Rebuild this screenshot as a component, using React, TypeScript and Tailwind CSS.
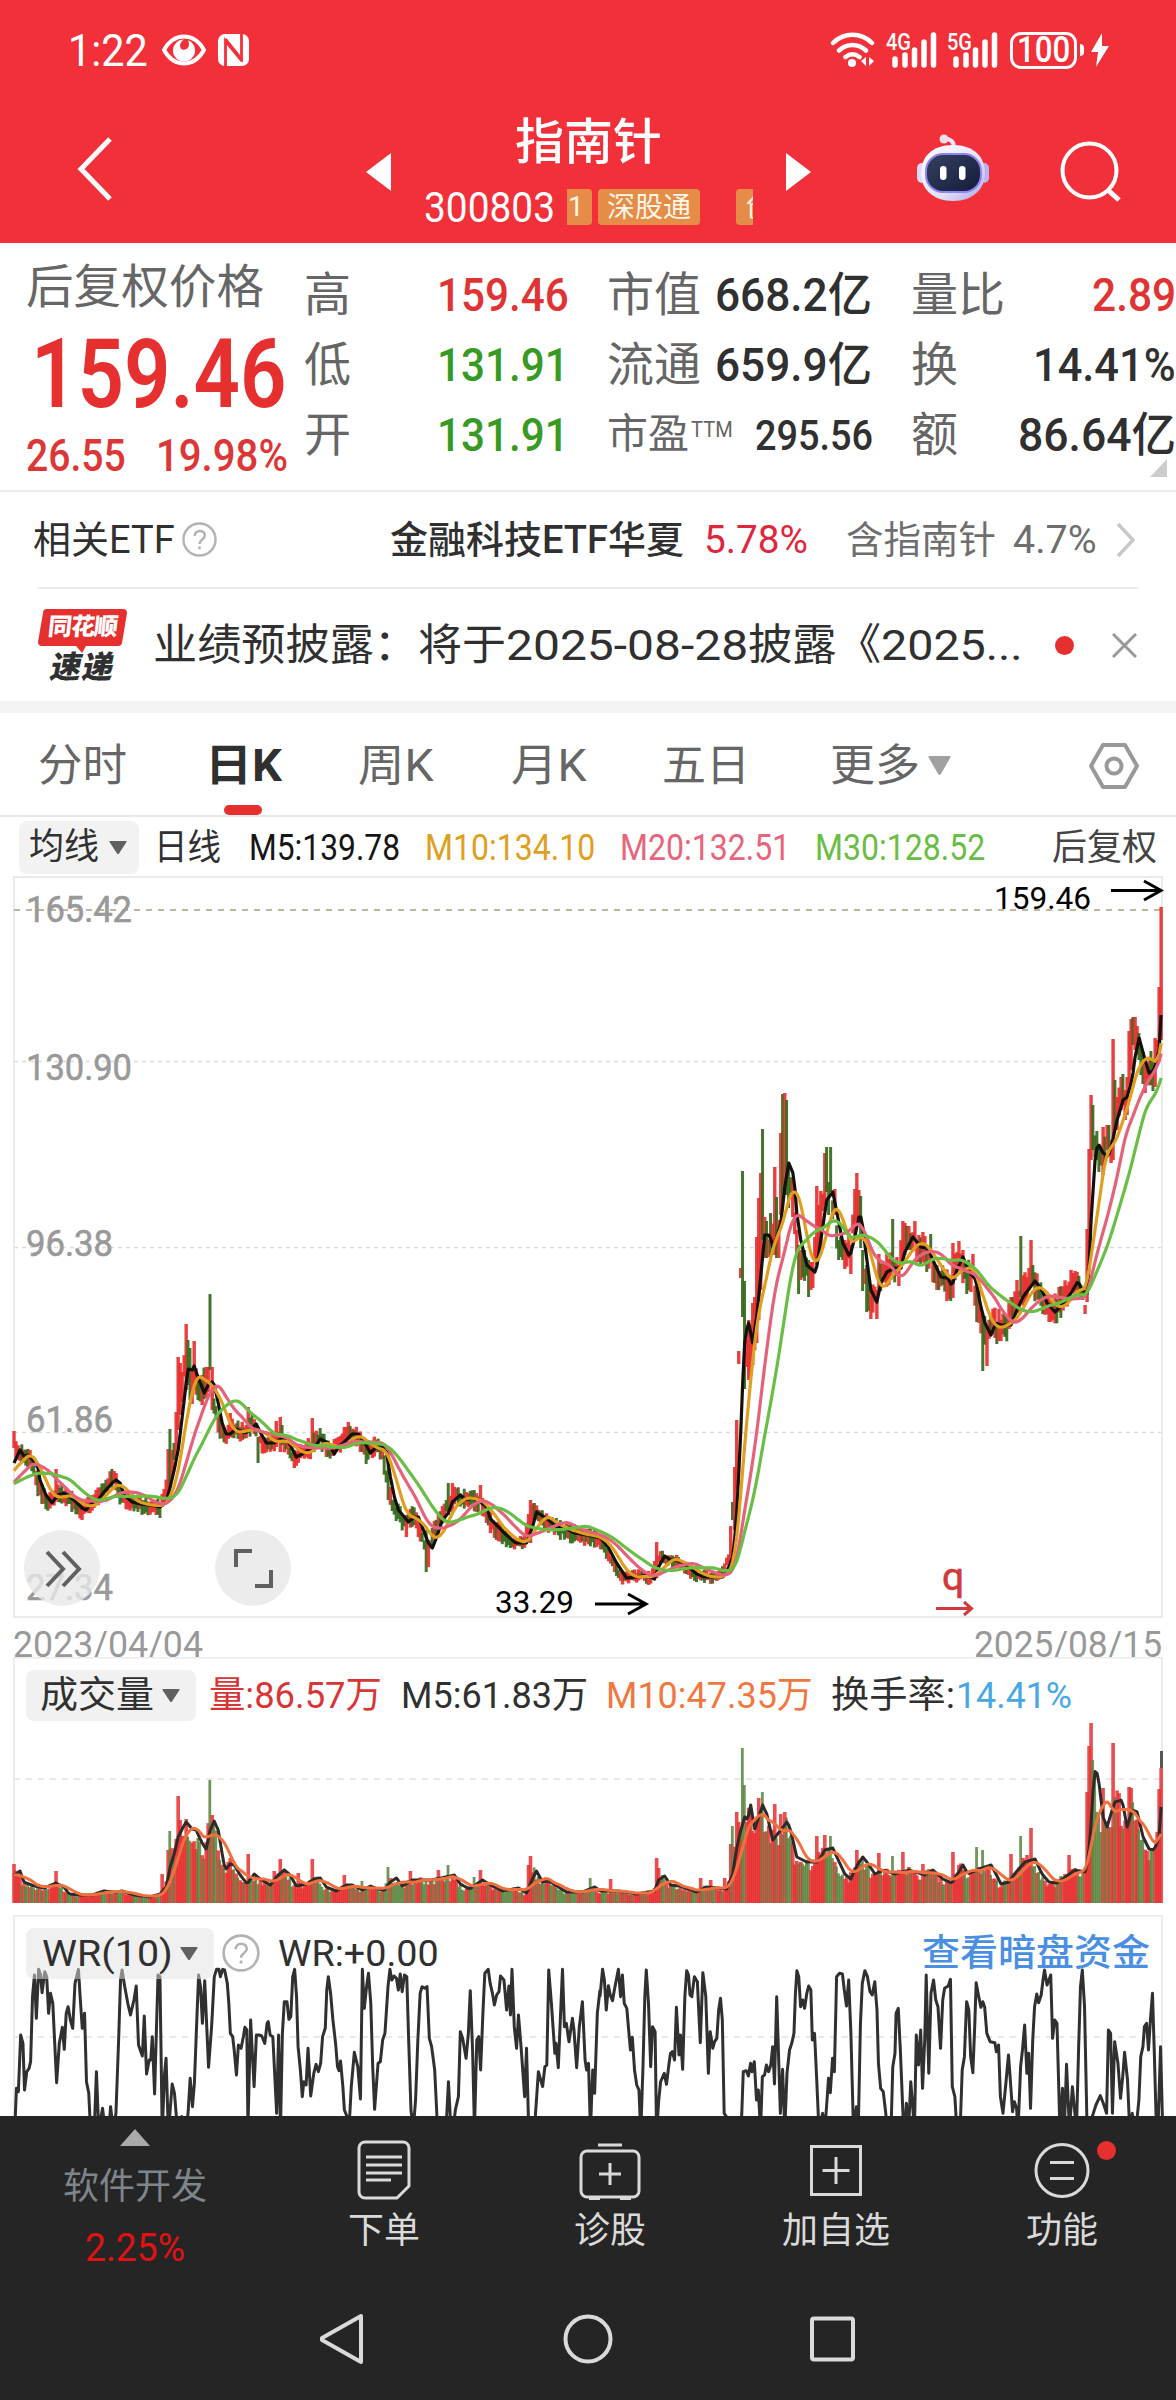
import { useLayoutEffect, useRef, useState, type ReactNode } from "react";

type Point = [number, number];

const DAYS = 574;
const UP = "#e62f2f";
const DOWN = "#35691a";

// [day, y] keyframes of the five day average
const M5: Point[] = [
  [0, 1463], [3, 1450], [5, 1456], [7, 1455], [10, 1461], [12, 1468], [13, 1480], [16, 1495], [19, 1503], [22, 1495],
  [25, 1493], [28, 1497], [31, 1502], [34, 1508], [36, 1510], [38, 1505], [42, 1500], [45, 1492], [49, 1483], [51, 1480],
  [53, 1483], [55, 1495], [59, 1502], [63, 1504], [68, 1505], [73, 1507], [76, 1502], [78, 1487], [80, 1470], [82, 1450],
  [84, 1417], [86, 1383], [87, 1369], [89, 1370], [90, 1366], [92, 1378], [93.5, 1385], [95, 1393], [97, 1385], [99, 1382],
  [100, 1385], [102, 1403], [104, 1423], [106, 1434], [108, 1434], [111, 1429], [115.5, 1433], [118, 1430], [121, 1424],
  [123, 1432], [126, 1443], [130, 1443], [134, 1438], [137.5, 1443], [141, 1457], [144, 1454], [147, 1450], [150, 1448],
  [153, 1439], [157, 1443], [160, 1454], [162, 1447], [165, 1442], [169, 1434], [172, 1434], [175, 1442], [178, 1453],
  [180.5, 1448], [184, 1447], [186, 1452], [188, 1477], [190, 1497], [192, 1510], [195, 1517], [197, 1522], [200, 1517],
  [202, 1517], [204.5, 1530], [207, 1543], [209, 1548], [211, 1538], [214, 1520], [217, 1513], [219, 1502], [223, 1495],
  [225.5, 1500], [229, 1498], [233, 1502], [236, 1507], [238, 1519], [242, 1527], [246, 1535], [250.5, 1543], [256, 1543],
  [259, 1527], [261, 1512], [265, 1517], [269, 1523], [272.5, 1528], [276, 1529], [280, 1533], [286, 1535], [293, 1538],
  [297, 1548], [301, 1563], [306, 1578], [311, 1577], [316, 1575], [320, 1579], [322, 1567], [325, 1556], [328, 1560],
  [332.5, 1561], [337, 1567], [341, 1574], [345, 1577], [354, 1577], [356, 1572], [359, 1557], [360.6, 1527],
  [361.7, 1487], [363, 1433], [364, 1383], [364.6, 1350], [365.5, 1333], [367, 1323], [369, 1343], [371, 1317],
  [373, 1277], [375, 1235], [377.5, 1235], [379, 1247], [381, 1237], [383, 1223], [385, 1187], [387, 1163], [389.5, 1175],
  [391, 1213], [393, 1240], [396, 1265], [400.5, 1273], [403, 1240], [406, 1200], [409, 1192], [411.5, 1217],
  [414, 1243], [417.5, 1257], [420, 1237], [422.5, 1212], [424, 1227], [426, 1260], [428, 1290], [431, 1302],
  [433, 1283], [436, 1272], [440, 1268], [443, 1268], [445, 1252], [449, 1237], [453, 1247], [456.5, 1248], [459, 1260],
  [463, 1277], [466.5, 1278], [468.5, 1286], [471, 1270], [474, 1257], [477.5, 1273], [480.5, 1280], [482.5, 1303],
  [485, 1323], [488, 1335], [490.5, 1323], [493, 1325], [498, 1325], [500.5, 1312], [504, 1297], [510, 1281],
  [513.5, 1290], [516, 1303], [520, 1312], [523.5, 1305], [528, 1293], [531.5, 1281], [533.5, 1290], [536, 1293],
  [537, 1267], [538, 1220], [540, 1160], [541.4, 1143], [544, 1153], [546.5, 1157], [548.5, 1143], [551, 1120],
  [554, 1100], [556, 1097], [558.5, 1080], [560, 1057], [562, 1038], [565, 1060], [567, 1073], [569.5, 1070],
  [572, 1050], [573, 1015],
];

// candles that stand out: [day, high y, low y, 1 = up / 0 = down]
const SPIKES: [number, number, number, number][] = [
  [0, 1431, 1448, 1], [21, 1469, 1500, 1], [50, 1471, 1482, 1], [73, 1505, 1518, 0], [77, 1449, 1500, 1], [78, 1429, 1487, 0],
  [79, 1450, 1478, 1], [81, 1412, 1460, 1], [82, 1357, 1430, 1], [83, 1363, 1415, 1], [84, 1372, 1402, 1], [86, 1324, 1390, 1],
  [87, 1340, 1385, 0], [88, 1348, 1400, 0], [89, 1370, 1404, 1], [90, 1341, 1390, 1], [92, 1375, 1400, 0], [94, 1375, 1405, 1],
  [96, 1367, 1398, 1], [97, 1367, 1392, 1], [98, 1294, 1370, 0], [99, 1367, 1410, 1], [108, 1413, 1437, 1], [117, 1407, 1430, 1],
  [122, 1437, 1463, 0], [131, 1421, 1447, 1], [133, 1417, 1452, 1], [134, 1425, 1445, 0], [140, 1450, 1468, 1], [149, 1418, 1448, 1],
  [153, 1428, 1440, 0], [165, 1427, 1446, 1], [167, 1422, 1445, 1], [187, 1450, 1500, 0], [196, 1515, 1537, 1], [206, 1530, 1572, 0],
  [207, 1540, 1567, 1], [217, 1483, 1515, 0], [219, 1483, 1512, 1], [233, 1485, 1503, 1], [257, 1514, 1540, 1], [258, 1500, 1543, 1],
  [260, 1503, 1520, 0], [321, 1542, 1578, 1], [358, 1526, 1570, 1], [359, 1502, 1520, 0], [360, 1467, 1530, 1], [361, 1420, 1490, 1],
  [362, 1351, 1364, 1], [363, 1268, 1278, 1], [364, 1171, 1317, 0], [365, 1281, 1389, 0], [366, 1340, 1367, 1], [367, 1320, 1380, 1],
  [368, 1325, 1375, 1], [369, 1303, 1365, 1], [370, 1297, 1350, 1], [371, 1237, 1343, 1], [372, 1198, 1320, 1], [373, 1173, 1290, 1],
  [374, 1129, 1240, 0], [375, 1217, 1258, 1], [376, 1221, 1258, 0], [378, 1213, 1255, 0], [380, 1167, 1255, 1], [381, 1197, 1258, 0],
  [382, 1220, 1258, 1], [383, 1133, 1215, 1], [384, 1094, 1205, 0], [385, 1093, 1195, 1], [386, 1100, 1195, 0], [387, 1165, 1208, 0],
  [389, 1180, 1217, 1], [392, 1245, 1294, 0], [393, 1250, 1280, 1], [397, 1260, 1297, 0], [398, 1262, 1290, 1], [399, 1262, 1288, 1],
  [401, 1186, 1265, 1], [402, 1205, 1250, 1], [403, 1191, 1250, 1], [405, 1153, 1205, 1], [406, 1147, 1192, 0], [407, 1182, 1215, 0],
  [408, 1147, 1192, 0], [410, 1189, 1215, 1], [412, 1240, 1260, 0], [415, 1240, 1269, 1], [418, 1245, 1274, 1], [420, 1189, 1235, 1],
  [421, 1173, 1220, 1], [422, 1190, 1225, 1], [423, 1196, 1248, 0], [424, 1250, 1291, 0], [426, 1265, 1312, 0], [428, 1290, 1319, 1],
  [431, 1290, 1319, 1], [432, 1254, 1290, 1], [439, 1219, 1268, 0], [442, 1265, 1286, 1], [444, 1221, 1260, 1], [445, 1223, 1255, 1],
  [447, 1226, 1250, 1], [450, 1221, 1240, 1], [452, 1235, 1262, 1], [454, 1232, 1262, 1], [458, 1234, 1258, 0], [461, 1265, 1290, 1],
  [468, 1280, 1301, 0], [469, 1243, 1298, 1], [472, 1241, 1262, 1], [476, 1265, 1294, 0], [478, 1270, 1292, 1], [479, 1254, 1275, 1],
  [481, 1280, 1322, 0], [482, 1290, 1323, 1], [484, 1315, 1371, 0], [486, 1325, 1366, 1], [491, 1325, 1344, 0], [493, 1320, 1341, 1],
  [498, 1297, 1325, 1], [501, 1280, 1310, 1], [503, 1236, 1297, 0], [506, 1277, 1300, 1], [508, 1240, 1285, 1], [509, 1265, 1285, 0],
  [528, 1270, 1290, 1], [529, 1273, 1290, 1], [531, 1272, 1290, 1], [535, 1305, 1314, 1], [536, 1229, 1302, 1], [537, 1149, 1265, 1],
  [538, 1095, 1160, 1], [539, 1105, 1150, 0], [541, 1131, 1160, 0], [542, 1145, 1172, 0], [544, 1127, 1175, 1], [546, 1125, 1150, 1],
  [547, 1125, 1155, 0], [548, 1140, 1163, 1], [549, 1039, 1160, 1], [550, 1080, 1130, 0], [551, 1097, 1130, 1], [553, 1077, 1110, 1],
  [554, 1074, 1105, 0], [555, 1090, 1120, 1], [556, 1077, 1115, 1], [557, 1031, 1085, 1], [558, 1019, 1070, 1], [559, 1017, 1045, 0],
  [560, 1017, 1050, 1], [561, 1026, 1055, 1], [562, 1033, 1060, 0], [563, 1045, 1075, 0], [565, 1063, 1093, 1], [568, 1051, 1085, 0],
  [569, 1060, 1091, 0], [570, 1038, 1087, 1], [571, 1040, 1066, 1], [572, 987, 1045, 1], [573, 907, 1040, 1],
];

// [day, height] keyframes of the averaged volume
const VOLUME: Point[] = [
  [0, 27], [3, 32], [5, 21], [10, 17], [15, 15], [21, 20], [25, 16], [27.5, 9], [33, 8], [39, 8], [45, 12], [50, 11], [54, 12],
  [60, 8], [68, 6], [73, 9], [76, 16], [78, 36], [80, 49], [82, 66], [84.5, 76], [86, 81], [89, 74], [91, 73], [92.5, 66],
  [94.5, 58], [96, 54], [98, 73], [100, 82], [102, 73], [104, 49], [105.5, 33], [108, 39], [110, 38], [113, 28], [116.5, 19],
  [120, 29], [123, 24], [128, 18], [132, 28], [135, 33], [137.5, 29], [141, 17], [146, 19], [150, 24], [153, 25], [156, 16],
  [161, 12], [166, 18], [169, 18], [174, 13], [178, 17], [181.5, 14], [185, 13], [188, 21], [191, 25], [194, 17], [199, 23],
  [203.5, 23], [209, 23], [213, 25], [220, 28], [223, 19], [227.5, 14], [234, 23], [238, 18], [244, 12], [252, 15], [256, 10],
  [259, 24], [261, 32], [264, 21], [267, 22], [270.5, 18], [276, 11], [284, 11], [290, 16], [293, 12], [302, 12], [311, 9],
  [320, 12], [322, 23], [325, 27], [328, 18], [332.5, 17], [341, 11], [346, 16], [356, 14], [359, 29], [360.5, 49],
  [362.5, 69], [365, 86], [366.5, 83], [368, 98], [370, 74], [372, 86], [374, 98], [376, 89], [379, 63], [383, 73], [386, 81],
  [387.5, 76], [391, 46], [396, 41], [401.5, 41], [405, 53], [409, 55], [411.5, 44], [415, 29], [418, 24], [421.5, 39],
  [424, 46], [426, 41], [430, 29], [434.5, 33], [440, 29], [447, 33], [455, 28], [459, 33], [464, 24], [468.5, 20],
  [474, 38], [476.5, 29], [482, 34], [488, 38], [490.5, 29], [493, 19], [497, 21], [500.5, 31], [505, 41], [510, 44],
  [513.5, 29], [517, 21], [521, 20], [530, 33], [535.5, 31], [537.5, 63], [539, 113], [540.3, 137], [542, 119], [544, 86],
  [546, 76], [548.5, 93], [550, 101], [553.5, 103], [556, 76], [558.5, 93], [561, 91], [564, 66], [567, 54], [569.5, 53],
  [572, 66], [573, 96],
];

const VOLUME_SPIKES: Record<number, number> = {
  0: 39, 21: 32, 74: 29, 77: 53, 78: 72, 80: 49, 82: 107, 83: 83, 86: 84, 98: 123, 99: 88, 108: 45, 117: 49, 130: 32, 133: 44,
  142: 30, 149: 44, 165: 28, 174: 22, 187: 36, 198: 32, 212: 33, 217: 38, 230: 26, 233: 33, 257: 38, 258: 47, 288: 25, 298: 24,
  321: 45, 322: 35, 343: 25, 348: 23, 355: 25, 358: 59, 359: 77, 361: 91, 364: 155, 365: 118, 372: 105, 374: 111, 380: 99,
  383: 89, 385: 91, 401: 67, 405: 68, 408: 67, 421: 53, 432: 50, 439: 47, 444: 51, 454: 39, 469: 51, 481: 56, 484: 53,
  498: 49, 503: 67, 506: 48, 508: 75, 527: 48, 536: 111, 537: 157, 538: 180, 539: 143, 541: 91, 544: 115, 549: 160, 550: 106,
  557: 116, 558: 115, 572: 114, 573: 135,
};

const WR_LEFT =
  "40,648 43,565 48,575 54,405 60,430 64,570 70,515 76,505 80,485 85,290 90,225 95,355 101,208 106,225 110,278 117,215 122,230 127,340 132,280 138,310 143,430 148,548 155,430 163,382 168,448 173,340 178,320 184,360 190,385 196,250 205,208 210,300 215,385 221,340 226,545 232,580 237,700 246,700 252,515 258,690 268,625 276,700 284,700 289,620 296,690 303,640 310,420 315,240 319,210 326,260 334,310 341,345 350,300 356,258 362,435 372,468 377,348 383,522 390,480 394,480 398,410 404,582 409,380 413,225 418,230 424,700 430,520 434,475 440,700 450,552 456,580 463,680 475,650 487,700 492,630 497,535 503,620 508,550 514,370 519,225 524,260 529,370 535,242 545,502 553,380 560,230 566,208 572,208 576,230 582,208 587,210 594,250 598,310 602,400 608,410 612,450 618,525 623,435 630,445 636,410 640,382 645,390 648,680 655,360 664,560 670,405 677,405 684,408 692,430 698,370 701,365 706,405 713,410 723,640 728,405 733,690 738,400 743,305 750,305 755,358 760,350 765,230 770,208 775,290 779,440 785,510 790,590 794,545 800,555 805,445 812,588 820,520 826,493 832,515 838,490 843,410 850,385 854,270 858,230 864,280 870,360 877,430 882,500 886,512 890,483 896,560 900,630 907,650 912,690 918,560 926,457 935,500 942,597 947,208 952,325 958,260 963,220 969,310 974,500 979,628 988,490 994,485 1000,420 1006,400 1014,260 1019,208 1024,240 1030,228 1036,235 1041,270 1046,222 1051,275 1057,225 1063,230 1068,420 1074,630 1080,690 1086,600 1092,420 1098,280 1103,260 1110,265 1116,260 1122,415 1128,440 1136,510 1144,700 1165,700 1172,545 1178,680 1185,680 1190,630 1198,590 1203,395 1209,415 1218,475 1224,400 1229,272 1235,450 1240,690 1246,420 1251,410 1256,510 1262,340 1267,220 1276,208 1281,250 1287,280 1292,315 1298,285 1304,275 1308,228 1317,240 1324,330 1330,258 1334,345 1338,208 1344,380 1350,445 1355,345 1362,445 1371,590 1376,445 1382,700 1396,700 1407,515 1418,560 1424,500 1429,495 1434,210 1441,310 1450,460 1453,430 1459,503 1465,340 1470,208 1475,380 1480,370 1487,425 1496,355 1500,390 1507,503 1514,380 1522,305 1529,480 1533,510 1538,490 1543,690 1549,510 1554,580 1561,340 1568,270";
const WR_RIGHT =
  "0,290 7,208 12,240 17,330 23,257 28,285 34,302 40,265 50,208 56,290 61,225 66,310 73,325 78,390 83,450 88,412 94,510 100,555 106,570 111,700 117,500 122,290 126,210 132,310 138,500 143,380 150,395 154,700 160,600 165,545 175,520 181,553 188,490 192,460 197,455 203,480 208,322 215,465 219,405 225,508 231,290 236,212 241,225 245,285 250,290 257,230 265,245 273,428 280,218 288,290 295,520 300,395 307,445 312,425 318,415 323,330 328,295 333,360 338,640 344,650 350,700 384,700 390,515 398,512 404,528 410,490 414,515 420,485 426,600 431,570 437,690 442,530 448,525 453,495 459,515 465,495 470,440 475,552 481,290 487,500 491,640 497,508 503,690 509,520 516,450 522,430 528,400 532,280 536,212 541,230 546,320 552,300 557,325 563,280 568,258 574,270 578,420 584,400 590,540 596,690 606,640 612,690 618,600 622,535 627,578 633,475 638,515 642,330 644,230 652,220 660,222 665,270 671,318 677,240 683,400 690,690 698,620 703,690 709,370 714,250 721,212 728,230 735,275 741,285 748,245 754,330 758,490 764,565 771,575 778,640 782,700 792,700 797,500 803,460 806,340 812,325 818,460 825,650 830,690 834,610 840,690 846,545 856,690 861,405 867,495 873,390 878,565 884,420 888,225 895,520 901,280 908,240 914,300 920,320 927,445 933,300 938,265 948,258 954,238 959,560 966,590 972,700 980,700 986,510 992,470 998,305 1004,330 1009,470 1015,518 1020,380 1024,248 1031,290 1037,322 1042,305 1047,320 1053,400 1062,425 1075,428 1079,455 1085,435 1090,590 1097,640 1104,560 1112,465 1117,540 1123,635 1128,605 1134,625 1138,690 1145,500 1150,450 1156,375 1162,520 1167,460 1172,625 1178,420 1183,320 1189,282 1194,308 1201,285 1206,240 1210,210 1217,255 1227,225 1232,415 1238,360 1244,370 1252,690 1259,565 1264,690 1270,493 1278,690 1286,560 1297,690 1303,440 1308,260 1313,210 1319,320 1326,690 1340,650 1350,615 1362,587 1370,610 1379,640 1384,390 1390,400 1395,640 1401,425 1410,490 1417,595 1423,530 1428,457 1436,540 1442,690 1449,640 1458,700 1467,600 1472,470 1478,440 1482,380 1488,370 1493,450 1499,350 1504,280 1509,460 1514,660 1520,650 1526,440 1532,700";

const xOf = (day: number) => 14 + day * 2.002;

function sample(points: Point[], day: number) {
  if (day <= points[0][0]) return points[0][1];
  for (let i = 1; i < points.length; i++) {
    const [x1, y1] = points[i];
    if (day <= x1) {
      const [x0, y0] = points[i - 1];
      return y0 + ((y1 - y0) * (day - x0)) / (x1 - x0);
    }
  }
  return points[points.length - 1][1];
}

function rand(n: number) {
  const s = Math.sin(n * 127.1 + 11.7) * 43758.5453;
  return s - Math.floor(s);
}

function price(day: number) {
  if (day < -20) return 1486;
  if (day < -10) return 1496;
  if (day < -2) return 1476;
  if (day >= 572) return day === 572 ? 1010 : 950;
  return sample(M5, day + 2);
}

function average(value: (day: number) => number, span: number, day: number) {
  let sum = 0;
  for (let i = 0; i < span; i++) sum += value(day - i);
  return sum / span;
}

function line(value: (day: number) => number) {
  return Array.from({ length: DAYS }, (_, d) => `${xOf(d).toFixed(1)},${value(d).toFixed(1)}`).join(" ");
}

const spikeByDay = new Map(SPIKES.map((s) => [s[0], s]));

const CANDLES = Array.from({ length: DAYS }, (_, d) => {
  const spike = spikeByDay.get(d);
  if (spike) return { d, top: spike[1], bottom: spike[2], up: spike[3] === 1 };
  const y = price(d);
  const swing = y < 1400 ? 11 : y > 1540 ? 4.5 : 7;
  const rising = sample(M5, d + 3) < sample(M5, d + 1);
  return {
    d,
    top: y - swing * (0.5 + rand(d) * 1.1),
    bottom: y + swing * (0.5 + rand(d + 900) * 1.1),
    up: rand(d + 300) < (rising ? 0.8 : 0.48),
  };
});

const volumeAt = (day: number) =>
  VOLUME_SPIKES[day] ?? Math.max(5, sample(VOLUME, day + 1) * (0.78 + rand(day + 50) * 0.34));

function Fit({ w, className = "", children }: { w: number; className?: string; children: ReactNode }) {
  const ref = useRef<HTMLSpanElement>(null);
  const [scale, setScale] = useState(1);

  useLayoutEffect(() => {
    if (ref.current) setScale(w / ref.current.offsetWidth);
  }, [w]);

  return (
    <span className={`block shrink-0 whitespace-nowrap ${className}`} style={{ width: w }}>
      <span ref={ref} className="inline-block origin-left" style={{ transform: `scaleX(${scale})` }}>
        {children}
      </span>
    </span>
  );
}

function StatusBar() {
  return (
    <div className="flex h-[100px] items-center pl-[68px]">
      <Fit w={80} className="text-[45px]">1:22</Fit>
      <svg className="ml-[13px]" width="46" height="34" viewBox="0 0 46 34">
        <path d="M3 17C8 8 15 3.500 23 3.500S38 8 43 17C38 26 31 30.500 23 30.500S8 26 3 17Z" fill="none" stroke="white" strokeWidth="4" strokeLinejoin="round" />
        <path d="M23 6.500a11 11 0 1 0 11 11c0-5-3-9-7-10 2 4 1 8-3 9-3 1-5-1-5-4 0-2 2-5 4-6Z" fill="white" />
      </svg>
      <svg className="ml-[11px]" width="31" height="34" viewBox="0 0 31 34">
        <rect x="0" y="1" width="31" height="32" rx="7" fill="white" />
        <path d="M7.500 34V8L24 28M23.500 0v26L7.500 6" fill="none" stroke="#f13039" strokeWidth="2.800" />
      </svg>
      <svg className="ml-[581px]" width="45" height="36" viewBox="0 0 45 36" fill="none" stroke="white" strokeWidth="4.500" strokeLinecap="round">
        <path d="M3 11C14 0 31 0 42 11M9 18.500C17 11 28 11 36 18.500M15.500 25c4.500-3.500 9.500-3.500 14 0" />
        <circle cx="22" cy="31" r="4" fill="white" stroke="none" />
        <path d="M36 25v9l-5-5ZM39 25v9l5-5Z" fill="white" stroke="none" />
      </svg>
      <Signal label="4G" className="ml-[11px]" />
      <Signal label="5G" className="ml-[9px]" />
      <div className="ml-[11px] flex h-[37px] w-[67px] items-center justify-center rounded-[11px] border-[3px] border-white">
        <Fit w={53} className="text-[36px] font-medium">100</Fit>
      </div>
      <div className="ml-[3px] h-3 w-1 rounded-r bg-white" />
      <svg className="ml-[6px]" width="20" height="34" viewBox="0 0 20 34">
        <path d="M12 0 1 19h7L6 34 19 13h-7Z" fill="white" />
      </svg>
    </div>
  );
}

function Signal({ label, className }: { label: string; className: string }) {
  return (
    <svg className={`overflow-visible ${className}`} width="52" height="36" viewBox="0 0 52 36">
      <text x="0" y="17.500" fontSize="24" fontWeight="500" fill="white" textLength="25" lengthAdjust="spacingAndGlyphs">{label}</text>
      <path d="M9 33v-6M19 33V23M28.500 33V18M38 33V10M47.500 33V3" stroke="white" strokeWidth="5.500" strokeLinecap="round" />
    </svg>
  );
}

function Robot() {
  return (
    <svg className="-mt-2 ml-[105px]" width="74" height="68" viewBox="0 0 74 68">
      <defs>
        <linearGradient id="shell" x1="0" y1="0" x2="1" y2="1">
          <stop offset="0" stopColor="#fff" />
          <stop offset="0.6" stopColor="#e4e2fa" />
          <stop offset="1" stopColor="#a9a4e6" />
        </linearGradient>
        <linearGradient id="visor" x1="0" y1="0" x2="1" y2="1">
          <stop offset="0" stopColor="#37415f" />
          <stop offset="1" stopColor="#131b3b" />
        </linearGradient>
      </defs>
      <path d="M38 13c0-5-3-8-10-9" fill="none" stroke="#efe6fa" strokeWidth="4" />
      <circle cx="28" cy="5" r="4.500" fill="#f8dce8" />
      <rect x="1" y="29" width="10" height="20" rx="5" fill="#ddd9fa" />
      <rect x="63" y="29" width="10" height="20" rx="5" fill="#b9b2f0" />
      <path d="M37 11c21 0 32 12 32 28S57 67 37 67 5 55 5 39 16 11 37 11Z" fill="url(#shell)" />
      <rect x="10" y="20" width="55" height="38" rx="17" fill="url(#visor)" stroke="#8d84f0" strokeWidth="2" />
      <rect x="24" y="32" width="6.500" height="14" rx="3.200" fill="white" />
      <rect x="43" y="32" width="6.500" height="14" rx="3.200" fill="white" />
    </svg>
  );
}

function TitleBar() {
  return (
    <div className="flex h-[143px] items-center pl-[76px]">
      <svg className="-mt-1.5" width="37" height="64" viewBox="0 0 37 64" fill="none" stroke="white" strokeWidth="5">
        <path d="M34 2 5 32l29 30" />
      </svg>
      <svg className="ml-[253px]" width="25" height="38" viewBox="0 0 25 38">
        <path d="M25 0v38L0 19Z" fill="white" />
      </svg>
      <div className="flex h-full w-[395px] flex-col pt-[18px]">
        <div className="text-center text-[49px] font-medium">指南针</div>
        <div className="mt-[22px] flex h-9 items-center pl-[33px]">
          <Fit w={131} className="text-[43px]">300803</Fit>
          <div className="ml-[12px] flex w-[186px] overflow-hidden text-[28px] text-[#fff6e6]">
            <span className="h-9 w-[25px] shrink-0 rounded-r bg-[#e58c48] pl-[1px] leading-9">1</span>
            <span className="ml-[6px] h-9 w-[102px] shrink-0 rounded bg-[#e58c48] text-center leading-[38px]">深股通</span>
            <span className="ml-9 h-9 w-[60px] shrink-0 rounded bg-[#e58c48] pl-[10px] leading-[38px]">创</span>
          </div>
        </div>
      </div>
      <svg width="25" height="38" viewBox="0 0 25 38">
        <path d="M0 0v38l25-19Z" fill="white" />
      </svg>
      <Robot />
      <svg className="ml-[70px]" width="61" height="61" viewBox="0 0 61 61" fill="none" stroke="white" strokeWidth="4">
        <circle cx="29.500" cy="29.500" r="27" />
        <path d="m49 50 10 9" strokeWidth="5" />
      </svg>
    </div>
  );
}

function Quote() {
  return (
    <section className="relative flex h-[249px] border-b-2 border-[#ebebeb] text-[47px] text-[#666]">
      <div className="w-[304px] pl-[26px] pt-[20px]">
        <Fit w={238}>后复权价格</Fit>
        <Fit w={256} className="mt-[16px] pl-[5px] text-[96px] font-semibold text-[#e62f2f]">159.46</Fit>
        <div className="mt-[11px] flex text-[45px] font-medium text-[#dd3636]">
          <Fit w={100}>26.55</Fit>
          <Fit w={132} className="ml-[30px]">19.98%</Fit>
        </div>
      </div>
      <div className="w-[303px] pt-[28px] font-medium">
        {[["高", "159.46", true], ["低", "131.91", false], ["开", "131.91", false]].map(([label, value, up]) => (
          <div key={String(label)} className="mb-[23px] flex">
            <span className="w-[133px] font-normal">{label}</span>
            <Fit w={132} className={up ? "text-[#e03434]" : "text-[#379a24]"}>{value}</Fit>
          </div>
        ))}
      </div>
      <div className="w-[304px] pt-[28px] font-medium text-[#303030]">
        <div className="mb-[23px] flex">
          <span className="w-[108px] font-normal text-[#666]">市值</span>
          <Fit w={157}>668.2亿</Fit>
        </div>
        <div className="mb-[23px] flex">
          <span className="w-[108px] font-normal text-[#666]">流通</span>
          <Fit w={157}>659.9亿</Fit>
        </div>
        <div className="flex pt-[3px] text-[43px]">
          <span className="w-[84px] text-[41px] font-normal text-[#666]">市盈</span>
          <Fit w={42} className="pt-[5px] text-[22px] font-normal text-[#666]">TTM</Fit>
          <Fit w={118} className="ml-[22px]">295.56</Fit>
        </div>
      </div>
      <div className="flex-1 pt-[28px] font-medium text-[#303030]">
        <div className="mb-[23px] flex justify-between">
          <span className="font-normal text-[#666]">量比</span>
          <Fit w={84} className="text-[#e03434]">2.89</Fit>
        </div>
        <div className="mb-[23px] flex justify-between">
          <span className="font-normal text-[#666]">换</span>
          <Fit w={143}>14.41%</Fit>
        </div>
        <div className="flex justify-between">
          <span className="font-normal text-[#666]">额</span>
          <Fit w={158}>86.64亿</Fit>
        </div>
      </div>
      <svg className="absolute bottom-[13px] right-[9px]" width="17" height="18" viewBox="0 0 17 18">
        <path d="M17 0v18H0Z" fill="#ccc" />
      </svg>
    </section>
  );
}

function Help({ size }: { size: number }) {
  return (
    <svg className="shrink-0" width={size} height={size} viewBox="0 0 36 36" fill="none" stroke="#b3b3b3" strokeWidth="2.500">
      <circle cx="18" cy="18" r="16.500" />
      <path d="M13 14.500c0-7 10.500-7 10.500-.5 0 4-5.500 4-5.500 8.500M18 25v3" />
    </svg>
  );
}

function EtfRow() {
  return (
    <div className="mx-[33px] flex h-[95px] items-center text-[38px] text-[#303030]">
      <Fit w={142}>相关ETF</Fit>
      <div className="ml-[7px]"><Help size={35} /></div>
      <Fit w={294} className="ml-[173px] font-medium">金融科技ETF华夏</Fit>
      <Fit w={104} className="ml-[20px] text-[#e0263c]">5.78%</Fit>
      <Fit w={150} className="ml-[38px] text-[#6e6e6e]">含指南针</Fit>
      <Fit w={84} className="ml-[17px] text-[#6e6e6e]">4.7%</Fit>
      <svg className="ml-[19px]" width="20" height="36" viewBox="0 0 20 36" fill="none" stroke="#c8c8c8" strokeWidth="3.500">
        <path d="m2 2 15 16L2 34" />
      </svg>
    </div>
  );
}

function NewsRow() {
  return (
    <div className="ml-[38px] mr-[38px] flex h-[114px] items-center border-t-2 border-[#ececec]">
      <div className="relative flex h-[72px] w-[89px] flex-col items-center text-center">
        <svg className="absolute left-0 top-0" width="89" height="44" viewBox="0 0 89 44">
          <path d="M9 0h76a4 4 0 0 1 4 4l-5 30a4 4 0 0 1-4 3H48l-4 7-6-7H4a4 4 0 0 1-4-4L5 4a4 4 0 0 1 4-4Z" fill="#e62f2f" />
        </svg>
        <span className="relative mt-[6px] -skew-x-6 text-[24px] font-black tracking-[-1px] text-white">同花顺</span>
        <span className="mt-[13px] -skew-x-12 text-[31px] font-black tracking-[1px] text-[#303030]">速递</span>
      </div>
      <div className="ml-[26px] flex text-[43px] text-[#303030]">
        <Fit w={265}>业绩预披露：</Fit>
        <Fit w={88}>将于</Fit>
        <Fit w={242}>2025-08-28</Fit>
        <Fit w={133}>披露《</Fit>
        <Fit w={142}>2025...</Fit>
      </div>
      <div className="ml-[32px] size-[19px] rounded-full bg-[#e62f2f]" />
      <svg className="ml-[38px]" width="25" height="25" viewBox="0 0 25 25" stroke="#999" strokeWidth="3">
        <path d="m1 1 23 23M24 1 1 24" />
      </svg>
    </div>
  );
}

function Tabs() {
  return (
    <nav className="relative flex h-[104px] items-center border-b-2 border-[#e8e8e8] pl-[38px] pt-[3px] text-[44px] text-[#666]">
      <Fit w={89}>分时</Fit>
      <Fit w={77} className="ml-[78px] font-bold text-[#303030]">日K</Fit>
      <Fit w={76} className="ml-[76px]">周K</Fit>
      <Fit w={76} className="ml-[77px]">月K</Fit>
      <Fit w={88} className="ml-[75px]">五日</Fit>
      <Fit w={90} className="ml-[80px]">更多</Fit>
      <Caret w={23} h={19} fill="#a0a0a0" className="ml-[8px]" />
      <svg className="ml-[138px]" width="50" height="46" viewBox="0 0 50 46" fill="none" stroke="#999" strokeWidth="4" strokeLinejoin="round">
        <path d="M14 2h22l12 21-12 21H14L2 23Z" />
        <circle cx="25" cy="23" r="7.500" />
      </svg>
      <span className="absolute bottom-0 left-[224px] h-[10px] w-[38px] rounded-[5px] bg-[#e62f2f]" />
    </nav>
  );
}

function Caret({ w = 18, h = 13, fill = "#606060", className = "" }: { w?: number; h?: number; fill?: string; className?: string }) {
  return (
    <svg className={`shrink-0 ${className}`} width={w} height={h} viewBox="0 0 18 13" preserveAspectRatio="none">
      <path d="M1 0h16q1 0 .5 1L10 12.500q-1 1-2 0L.5 1Q0 0 1 0Z" fill={fill} />
    </svg>
  );
}

function AverageRow() {
  return (
    <div className="flex h-[58px] items-center pl-[19px] pt-[2px] text-[36px]">
      <button className="flex h-[53px] w-[120px] items-center rounded-lg bg-[#f2f2f2] pl-[10px] text-[#303030]">
        <Fit w={70}>均线</Fit>
        <Caret className="ml-[10px]" />
      </button>
      <Fit w={67} className="ml-[15px] pt-[2px] text-[#303030]">日线</Fit>
      <Fit w={151} className="ml-[28px] pt-[2px] text-[#151515]">M5:139.78</Fit>
      <Fit w={170} className="ml-[25px] pt-[2px] text-[#e09f20]">M10:134.10</Fit>
      <Fit w={170} className="ml-[25px] pt-[2px] text-[#e9637a]">M20:132.51</Fit>
      <Fit w={170} className="ml-[25px] pt-[2px] text-[#6abd45]">M30:128.52</Fit>
      <Fit w={105} className="ml-[67px] pt-[2px] text-[#444]">后复权</Fit>
    </div>
  );
}

const AXIS: [string, number, number][] = [
  ["165.42", 922, 106],
  ["130.90", 1080, 106],
  ["96.38", 1256, 87],
  ["61.86", 1432, 87],
  ["27.34", 1600, 87],
];

function PriceChart() {
  return (
    <svg className="block" width="1176" height="782" viewBox="0 875 1176 782">
      <rect x="14" y="877" width="1148" height="740" fill="none" stroke="#ebebeb" strokeWidth="2" />
      <path d="M14 910H1162" stroke="#a9a07e" strokeWidth="1.500" strokeDasharray="6 6" />
      <path d="M14 1061.500H1162M14 1247.500H1162M14 1432.500H1162" stroke="#dcdcdc" strokeDasharray="4 4" strokeWidth="1.300" />
      {CANDLES.map((c) => (
        <rect key={c.d} x={xOf(c.d) - 1.7} y={c.top} width={c.up ? 3.4 : 3} height={c.bottom - c.top} fill={c.up ? UP : DOWN} fillOpacity="0.92" />
      ))}
      <g fill="none" strokeWidth="3.200" strokeLinejoin="round">
        <polyline points={line((d) => sample(M5, d))} stroke="#14100c" />
        <polyline points={line((d) => average(price, 10, d))} stroke="#e09f20" />
        <polyline points={line((d) => average(price, 20, d))} stroke="#e5637a" />
        <polyline points={line((d) => average(price, 30, d))} stroke="#6abd45" />
      </g>
      <g fill="#999" fontSize="37">
        {AXIS.map(([label, y, w]) => (
          <text key={label} x="26" y={y} textLength={w} lengthAdjust="spacingAndGlyphs" stroke="#999" strokeWidth="0.6">{label}</text>
        ))}
        <text x="13" y="1657" textLength="190" lengthAdjust="spacingAndGlyphs">2023/04/04</text>
        <text x="974" y="1657" textLength="188" lengthAdjust="spacingAndGlyphs">2025/08/15</text>
      </g>
      <g fill="#000" fontSize="32">
        <text x="994" y="909" textLength="97" lengthAdjust="spacingAndGlyphs">159.46</text>
        <text x="495" y="1613" textLength="79" lengthAdjust="spacingAndGlyphs">33.29</text>
      </g>
      <path d="M1111 890.500h50M1144 881l17 9.500-17 9.500M595 1604h50M628 1594l18 10-18 10" fill="none" stroke="#000" strokeWidth="3" />
      <text x="942" y="1590" fontSize="39" fill="#d03a3a" stroke="#d03a3a" strokeWidth="0.6">q</text>
      <path d="M936 1608.500h35M964 1602l7.500 6.500-7.500 6.500" fill="none" stroke="#d03a3a" strokeWidth="3" />
      <circle cx="62" cy="1568" r="38" fill="#e8e8e8" fillOpacity="0.8" />
      <circle cx="253" cy="1568" r="38" fill="#ececec" />
      <path d="m47 1552 16 17-16 17M63 1552l16 17-16 17M236 1567v-16h16M271 1570v16h-16" fill="none" stroke="#606060" strokeWidth="4" />
    </svg>
  );
}

function VolumePanel() {
  return (
    <section className="relative h-[258px]">
      <svg className="absolute inset-0" width="1176" height="258" viewBox="0 1657 1176 258">
        <path d="M14 1903V1657.500H1162V1903" fill="none" stroke="#ebebeb" strokeWidth="2" />
        <path d="M14 1779H1162" stroke="#e8e8e8" strokeWidth="2" strokeDasharray="6 6" />
        {CANDLES.map((c) => (
          <rect key={c.d} x={xOf(c.d) - 1.8} y={1903 - volumeAt(c.d)} width={c.up ? 3.6 : 2.8} height={volumeAt(c.d)} fill={c.up ? UP : "#57853c"} fillOpacity="0.85" />
        ))}
        <rect x="1160" y="1751" width="3" height="17" fill="#555" />
        <g fill="none" strokeWidth="3" strokeLinejoin="round">
          <polyline points={line((d) => 1903 - sample(VOLUME, d))} stroke="#2e2a28" />
          <polyline points={line((d) => 1903 - average((n) => sample(VOLUME, n + 2), 10, d))} stroke="#f07040" />
        </g>
      </svg>
      <div className="relative flex h-[76px] items-center pl-[26px] text-[37px] text-[#303030]">
        <button className="flex h-[51px] w-[170px] items-center rounded-lg bg-[#f1f1f1] pl-[12px]">
          <Fit w={114}>成交量</Fit>
          <Caret className="ml-[10px]" />
        </button>
        <Fit w={173} className="ml-[13px] text-[#d83636]">量:86.57万</Fit>
        <Fit w={187} className="ml-[19px]">M5:61.83万</Fit>
        <Fit w={207} className="ml-[18px] text-[#f07840]">M10:47.35万</Fit>
        <Fit w={124} className="ml-[18px]">换手率:</Fit>
        <Fit w={116} className="ml-[1px] text-[#46a9e6]">14.41%</Fit>
      </div>
    </section>
  );
}

function WrPanel() {
  return (
    <section className="relative h-[201px] overflow-hidden">
      <svg className="absolute inset-0" width="1176" height="201" viewBox="0 1915 1176 201">
        <path d="M14 2116V1915.500H1162V2116" fill="none" stroke="#ebebeb" strokeWidth="2" />
        <path d="M14 2037H1162" stroke="#e8e8e8" strokeWidth="2" strokeDasharray="6 6" />
        <g fill="none" stroke="#303030" strokeWidth="3" strokeLinejoin="round">
          <polyline points={WR_LEFT} transform="translate(0 1900) scale(.38265 .33333)" vectorEffect="non-scaling-stroke" />
          <polyline points={WR_RIGHT} transform="translate(600 1900) scale(.36735 .33333)" vectorEffect="non-scaling-stroke" />
        </g>
      </svg>
      <div className="relative flex h-[76px] items-center pl-[26px] text-[37px] text-[#303030]">
        <button className="flex h-[51px] w-[188px] items-center rounded-lg bg-[#e2e2e2]/50 pl-[12px]">
          <Fit w={131}>WR(10)</Fit>
          <Caret className="ml-[11px]" />
        </button>
        <div className="ml-[8px]"><Help size={38} /></div>
        <Fit w={161} className="ml-[18px]">WR:+0.00</Fit>
        <Fit w={228} className="ml-[483px] font-medium text-[#4a8fe2]">查看暗盘资金</Fit>
      </div>
    </section>
  );
}

function BottomBar() {
  return (
    <footer className="flex h-[146px] bg-[#252525] text-[36px] text-[#dadada]">
      <div className="flex w-[270px] flex-col items-center pt-[13px]">
        <svg className="shrink-0" width="30" height="17" viewBox="0 0 30 17"><path d="M15 0 30 17H0Z" fill="#aaa" /></svg>
        <Fit w={144} className="mt-[23px] text-[#7e868b]">软件开发</Fit>
        <Fit w={100} className="mt-[24px] text-[38px] text-[#e01212]">2.25%</Fit>
      </div>
      <div className="flex w-[228px] flex-col items-center pt-[24px]">
        <svg width="54" height="60" viewBox="0 0 54 60" fill="none" stroke="#dadada" strokeWidth="3">
          <path d="M8 2h38a6 6 0 0 1 6 6v38L40 58H8a6 6 0 0 1-6-6V8a6 6 0 0 1 6-6Z" strokeLinejoin="round" />
          <path d="M9 17h36M9 25h36M9 33h36M9 40h25" />
        </svg>
        <span className="mt-[13px]">下单</span>
      </div>
      <div className="flex w-[224px] flex-col items-center pt-[24px]">
        <svg width="62" height="60" viewBox="0 0 62 60" fill="none" stroke="#dadada" strokeWidth="3">
          <rect x="2" y="11" width="58" height="46" rx="6" />
          <path d="M19 5h24M31 23v22M20 34h22" />
          <path d="M10 59h11M41 59h11" strokeWidth="4" />
        </svg>
        <span className="mt-[13px]">诊股</span>
      </div>
      <div className="flex w-[228px] flex-col items-center pt-[24px]">
        <svg width="52" height="60" viewBox="0 0 52 60" fill="none" stroke="#dadada" strokeWidth="3">
          <rect x="1.500" y="6.500" width="49" height="48" />
          <path d="M26 17v27M12.500 30.500h27" />
        </svg>
        <span className="mt-[13px]">加自选</span>
      </div>
      <div className="relative flex w-[224px] flex-col items-center pt-[24px]">
        <svg width="56" height="60" viewBox="0 0 56 60" fill="none" stroke="#dadada" strokeWidth="3">
          <circle cx="28" cy="30.500" r="26" />
          <path d="M16 22.500h24M16 38.500h24" />
        </svg>
        <span className="mt-[13px]">功能</span>
        <span className="absolute left-[147px] top-[25px] size-[19px] rounded-full bg-[#e62f2f]" />
      </div>
    </footer>
  );
}

function SystemNav() {
  return (
    <div className="flex h-[138px] items-center bg-[#252525] pl-[319px] pt-[16px]">
      <svg width="46" height="52" viewBox="0 0 46 52" fill="none" stroke="#dadada" strokeWidth="4" strokeLinejoin="round">
        <path d="M42 3v46L3 27v-2Z" />
      </svg>
      <svg className="ml-[198px]" width="50" height="50" viewBox="0 0 50 50" fill="none" stroke="#dadada" strokeWidth="4">
        <circle cx="25" cy="25" r="22.500" />
      </svg>
      <svg className="ml-[196px]" width="47" height="46" viewBox="0 0 47 46" fill="none" stroke="#dadada" strokeWidth="4">
        <rect x="3" y="2.500" width="41" height="41" rx="2" />
      </svg>
    </div>
  );
}

export default function App() {
  return (
    <div className="flex h-[2400px] w-[1176px] flex-col overflow-hidden bg-white font-[Roboto,'Noto_Sans_CJK_SC',sans-serif] leading-none">
      <header className="bg-[#f13039] text-white">
        <StatusBar />
        <TitleBar />
      </header>
      <Quote />
      <EtfRow />
      <NewsRow />
      <div className="h-[12px] bg-[#f4f4f4]" />
      <Tabs />
      <AverageRow />
      <PriceChart />
      <VolumePanel />
      <WrPanel />
      <BottomBar />
      <SystemNav />
      <div className="flex-1 bg-[#252525]" />
    </div>
  );
}
